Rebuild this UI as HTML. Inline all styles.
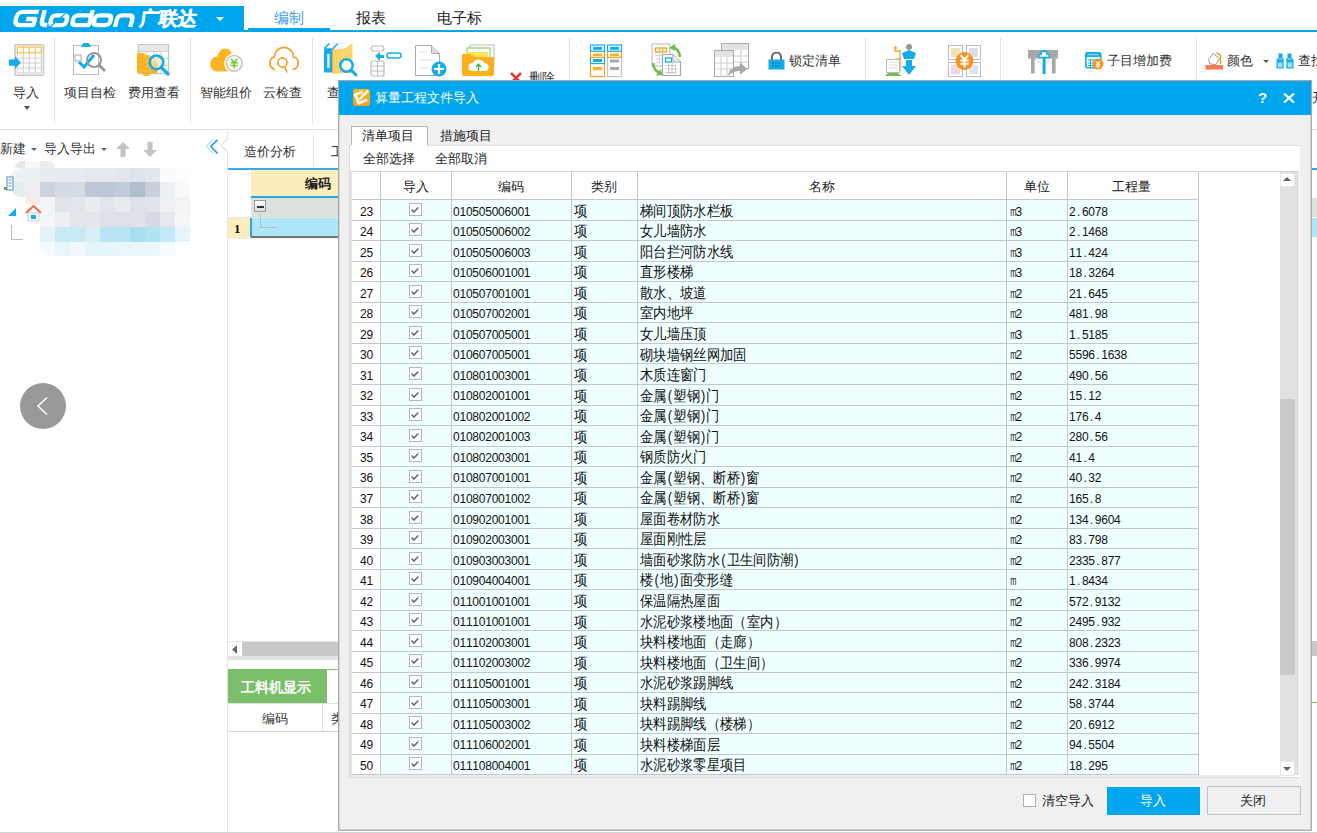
<!DOCTYPE html>
<html><head><meta charset="utf-8"><style>
html,body{margin:0;padding:0;width:1317px;height:833px;overflow:hidden;background:#fff;position:relative;font-family:"Liberation Sans",sans-serif}
div,svg{position:absolute}
.t{white-space:nowrap}
.tri{width:0;height:0;border-style:solid}
.num{font-family:"Liberation Sans",sans-serif;font-size:12px;line-height:12px;color:#111}
.num i{font-style:normal;display:inline-block;width:6.45px;text-align:center}
.num i.m{font-size:12px;transform:scaleX(0.62)}
.cj{font-size:14.5px;line-height:17px;color:#111;transform-origin:0 0;transform:scaleX(0.89)}
.cj i.p{font-style:normal;display:inline-block;width:7.25px;text-align:center}
.cb{width:13px;height:13px;border:1px solid #b5b5b5;background:#fff;box-sizing:border-box}
</style></head><body>
<div style="left:0px;top:6px;width:244px;height:26px;background:#00a6ed"></div>
<svg class="t" style="left:10px;top:8px" width="132" height="21" viewBox="0 0 132 21"><g transform="translate(2,2) matrix(1.02,0,-0.25,1,4.25,0)" stroke="#fff" stroke-width="4.3" fill="none" stroke-linejoin="round"><path d="M22.5 1.9H7.5Q1.9 1.9 1.9 7.5V9.5Q1.9 15.1 7.5 15.1H20.6V9H12"/><path d="M27.9 0V10.5Q27.9 15.1 32.5 15.1H34"/><path d="M40.5 5.4H48Q52 5.4 52 9.4V11Q52 15.1 48 15.1H40.5Q36.5 15.1 36.5 11V9.4Q36.5 5.4 40.5 5.4Z"/><path d="M75 0V15.1H62Q58 15.1 58 11V9.4Q58 5.4 62 5.4H75"/><path d="M83 5.4H91Q95 5.4 95 9.4V11Q95 15.1 91 15.1H83Q79 15.1 79 11V9.4Q79 5.4 83 5.4Z"/><path d="M101 17V9.4Q101 5.4 105 5.4H112Q116 5.4 116 9.4V17"/></g><path d="M40 19L55 6" stroke="#00a6ed" stroke-width="1.3"/></svg>
<div class="t" style="left:140px;top:8px;font:bold 19px/22px 'Liberation Sans',sans-serif;color:#fff;-webkit-text-stroke:0.5px #fff;transform:skewX(-8deg)">广联达</div>
<div class="tri" style="left:216px;top:17px;border-width:4px 4px 0 4px;border-color:#fff transparent transparent transparent"></div>
<div style="left:0px;top:30px;width:1317px;height:2px;background:#00a6ed"></div>
<div style="left:248px;top:28px;width:82px;height:4px;background:#00a6ed"></div>
<div class="t" style="left:274px;top:9px;font-size:15px;line-height:18px;color:#3d9de6">编制</div>
<div class="t" style="left:356px;top:9px;font-size:15px;line-height:18px;color:#222">报表</div>
<div class="t" style="left:437px;top:9px;font-size:15px;line-height:18px;color:#222">电子标</div>
<div style="left:54px;top:38px;width:1px;height:85px;background:#e3e3e3"></div>
<div style="left:190px;top:38px;width:1px;height:85px;background:#e3e3e3"></div>
<div style="left:312px;top:38px;width:1px;height:85px;background:#e3e3e3"></div>
<div style="left:569px;top:38px;width:1px;height:85px;background:#e3e3e3"></div>
<div style="left:865px;top:38px;width:1px;height:85px;background:#e3e3e3"></div>
<div style="left:1000px;top:38px;width:1px;height:85px;background:#e3e3e3"></div>
<div style="left:1196px;top:38px;width:1px;height:85px;background:#e3e3e3"></div>
<div style="left:0px;top:129px;width:1317px;height:1px;background:#e2e2e2"></div>
<div class="t" style="left:13px;top:84px;font-size:13px;line-height:17px;color:#333">导入</div>
<div class="t" style="left:64px;top:84px;font-size:13px;line-height:17px;color:#333">项目自检</div>
<div class="t" style="left:128px;top:84px;font-size:13px;line-height:17px;color:#333">费用查看</div>
<div class="t" style="left:200px;top:84px;font-size:13px;line-height:17px;color:#333">智能组价</div>
<div class="t" style="left:263px;top:84px;font-size:13px;line-height:17px;color:#333">云检查</div>
<div class="t" style="left:327px;top:84px;font-size:13px;line-height:17px;color:#333">查</div>
<div class="tri" style="left:24px;top:106px;border-width:4px 3.5px 0 3.5px;border-color:#555 transparent transparent transparent"></div>
<svg class="t" style="left:8px;top:43px" width="38" height="34" viewBox="0 0 38 34"><rect x="7" y="1.8" width="28.5" height="30.5" rx="1" fill="#fff" stroke="#c8c8c8" stroke-width="1.6"/><rect x="9.3" y="4" width="24" height="5.8" fill="#fff" stroke="#f9c14e" stroke-width="1.3"/><path d="M15.3 4v5.8M21.3 4v5.8M27.3 4v5.8" stroke="#f9c14e" stroke-width="1.1"/><path d="M9.3 9.8V30H33.3V9.8M9.3 15h24M9.3 20h24M9.3 25h24M15.3 9.8V30M21.3 9.8V30M27.3 9.8V30" stroke="#cfcfcf" stroke-width="1.1" fill="none"/><path d="M0.8 16.5H7V13.5L13 19.6 7 25.7V22.7H0.8Z" fill="#13aee9"/></svg>
<svg class="t" style="left:72px;top:42px" width="36" height="36" viewBox="0 0 36 36"><rect x="1.5" y="3.5" width="25" height="29" fill="#fff" stroke="#bbb"/><path d="M11 1h6l2 4h-10z" fill="#13aee9"/><rect x="3" y="13" width="6" height="6" fill="none" stroke="#aaa"/><path d="M7 20l5 5 10-12" stroke="#13aee9" stroke-width="3" fill="none"/><circle cx="22" cy="18" r="7" fill="none" stroke="#9a9a9a" stroke-width="2"/><path d="M27 23l6 6" stroke="#9a9a9a" stroke-width="3"/></svg>
<svg class="t" style="left:136px;top:43px" width="35" height="35" viewBox="0 0 35 35"><rect x="2.5" y="1.5" width="30" height="29" fill="#fff" stroke="#c4c4c4" stroke-width="1.3"/><rect x="3" y="2" width="29" height="6.5" fill="#e8e8e8"/><path d="M3 8.5H32M10 8.5V30M17.5 8.5V30M25 8.5V30M3 15.5H32M3 22.5H32" stroke="#cfcfcf" stroke-width="1"/><rect x="1" y="10" width="8" height="20" rx="1.5" fill="#fbb524"/><rect x="6.5" y="12" width="8" height="21" rx="1.5" fill="#fcbf3a"/><rect x="13.5" y="18" width="8" height="12" rx="1.5" fill="#fbb524"/><path d="M1 14.5H9M1 19H9M1 23.5H9M6.5 16.5H14.5M6.5 21H14.5M6.5 25.5H14.5M6.5 30H14.5" stroke="#f39c12" stroke-width="0.8"/><circle cx="20.5" cy="19.3" r="6.8" fill="#fde6b8" fill-opacity="0.7" stroke="#13aee9" stroke-width="2.6"/><path d="M25.3 24.3L32 31" stroke="#13aee9" stroke-width="3.2" stroke-linecap="round"/></svg>
<svg class="t" style="left:205px;top:42px" width="40" height="36" viewBox="0 0 40 36"><circle cx="12.5" cy="22" r="7.5" fill="#fbb520"/><circle cx="20.1" cy="13.2" r="6.8" fill="#fbb520"/><rect x="12.5" y="12" width="14" height="17.3" fill="#fbb520"/><circle cx="29.2" cy="21.3" r="10" fill="#fff"/><circle cx="29.2" cy="21.3" r="7.8" fill="#fff" stroke="#cdc8ba" stroke-width="1.7"/><path d="M25.8 16.8L29.2 20.3 32.6 16.8M29.2 20.3V26.5M25.6 20.8H32.8M25.6 23.5H32.8" stroke="#78c72e" stroke-width="1.6" fill="none"/></svg>
<svg class="t" style="left:262px;top:42px" width="40" height="36" viewBox="0 0 40 36"><path d="M13 27.5A6.5 6.5 0 0 1 12.5 14.9A9.5 9.5 0 0 1 31.5 14.8A6.5 6.5 0 0 1 30.5 27.5" fill="none" stroke="#f7a12b" stroke-width="1.7"/><circle cx="20.4" cy="20.5" r="4.6" fill="none" stroke="#f7a12b" stroke-width="1.7"/><path d="M22.6 24.6L25 30.5" stroke="#f7a12b" stroke-width="1.7"/></svg>
<svg class="t" style="left:323px;top:42px" width="36" height="36" viewBox="0 0 36 36"><path d="M19 8L29.5 1.5V31H19Z" fill="#fcd66d"/><rect x="9" y="7" width="10.5" height="24.5" fill="#fcd36a"/><rect x="9" y="7" width="1.2" height="24.5" fill="#f4b43a"/><path d="M10 7L15 1.5H21L16 7Z" fill="#fff" stroke="#e2e2e2" stroke-width="0.6"/><path d="M9.5 7.3L14.8 1.5" stroke="#13aee9" stroke-width="1.4"/><rect x="1" y="6" width="8" height="24.5" rx="1" fill="#13aee9"/><rect x="4.3" y="12" width="2.2" height="14" fill="#fff"/><path d="M2.5 6L7.5 1.5H13L8.5 6Z" fill="#fff" stroke="#e2e2e2" stroke-width="0.6"/><path d="M1.2 6.5L6.5 1.5" stroke="#13aee9" stroke-width="1.6"/><circle cx="23.5" cy="23.5" r="6.2" fill="#fff" stroke="#13aee9" stroke-width="2.6"/><path d="M28 28L33 33" stroke="#13aee9" stroke-width="3" stroke-linecap="round"/></svg>
<svg class="t" style="left:370px;top:45px" width="32" height="32" viewBox="0 0 32 32"><rect x="1" y="1" width="13" height="5" rx="2.5" fill="none" stroke="#bbb" stroke-width="1.2"/><path d="M5 11l5-4v3h4v3h-4v3z" fill="#13aee9"/><rect x="17" y="8" width="14" height="5" rx="2.5" fill="none" stroke="#13aee9" stroke-width="1.5"/><rect x="1" y="16" width="13" height="15" rx="2" fill="none" stroke="#bbb" stroke-width="1.2"/><line x1="1" y1="21" x2="14" y2="21" stroke="#bbb"/><line x1="1" y1="26" x2="14" y2="26" stroke="#bbb"/><line x1="7.5" y1="16" x2="7.5" y2="31" stroke="#bbb"/></svg>
<svg class="t" style="left:414px;top:44px" width="34" height="33" viewBox="0 0 34 33"><path d="M1.5 1.5h16l8 8v22h-24z" fill="#fff" stroke="#aaa"/><path d="M17.5 1.5v8h8" fill="#ddd" stroke="#aaa"/><line x1="5" y1="8" x2="12" y2="8" stroke="#ddd"/><line x1="5" y1="16" x2="19" y2="16" stroke="#ddd"/><line x1="5" y1="24" x2="15" y2="24" stroke="#ddd"/><circle cx="25" cy="25" r="7.5" fill="#13aee9"/><path d="M25 20v10M20 25h10" stroke="#fff" stroke-width="2.2"/></svg>
<svg class="t" style="left:462px;top:44px" width="34" height="33" viewBox="0 0 34 33"><rect x="8" y="1" width="24" height="20" fill="#fff" stroke="#bbb"/><rect x="5" y="4" width="23" height="18" fill="#fff" stroke="#7cc148"/><rect x="4" y="8" width="22" height="12" fill="#fde55a"/><path d="M0 10h10l2 3h20v17a2 2 0 0 1-2 2H2a2 2 0 0 1-2-2z" fill="#fbb11c"/><path d="M10 27a4 4 0 0 1 1-8a6 6 0 0 1 11 0a4 4 0 0 1 1 8z" fill="#fff"/><path d="M16.5 27v-6M14 23l2.5-3 2.5 3" stroke="#3bb24a" stroke-width="1.3" fill="none"/></svg>
<svg class="t" style="left:509px;top:71px" width="14" height="14" viewBox="0 0 14 14"><path d="M2 2l10 10M12 2L2 12" stroke="#e53935" stroke-width="2.5"/></svg>
<div class="t" style="left:529px;top:69px;font-size:13px;line-height:17px;color:#333">删除</div>
<svg class="t" style="left:589px;top:44px" width="35" height="34" viewBox="0 0 35 34"><rect x="1.5" y="19.5" width="14" height="13" fill="#fff" stroke="#f6a21d" stroke-width="1.2"/><rect x="4" y="23" width="9" height="3.2" fill="#fbb520"/><rect x="1.5" y="13.3" width="14" height="6.2" fill="#fff" stroke="#13aee9" stroke-width="1.2"/><rect x="4" y="15" width="9" height="3" fill="#13aee9"/><rect x="1.5" y="7.2" width="14" height="6.1" fill="#fff" stroke="#f6a21d" stroke-width="1.2"/><rect x="4" y="9.5" width="9" height="2.5" fill="#fbb520"/><rect x="1.5" y="1" width="14" height="6.2" fill="#fff" stroke="#13aee9" stroke-width="1.2"/><rect x="4" y="2.8" width="9" height="3" fill="#13aee9"/><rect x="18.5" y="13.3" width="14" height="19.2" fill="#fff" stroke="#c4c4c4" stroke-width="1.2"/><rect x="21" y="15.5" width="9" height="3" fill="#a8a8a8"/><rect x="21" y="23" width="9" height="3" fill="#a8a8a8"/><rect x="18.5" y="7.2" width="14" height="6.1" fill="#fff" stroke="#f6a21d" stroke-width="1.2"/><rect x="21" y="9.5" width="9" height="2.5" fill="#fbb520"/><rect x="18.5" y="1" width="14" height="6.2" fill="#fff" stroke="#13aee9" stroke-width="1.2"/><rect x="21" y="2.8" width="9" height="3" fill="#13aee9"/></svg>
<svg class="t" style="left:651px;top:43px" width="34" height="34" viewBox="0 0 34 34"><rect x="1" y="1" width="18" height="22" fill="#fff" stroke="#c4c4c4" stroke-width="1.2"/><rect x="4.5" y="5" width="11" height="4" fill="#fff" stroke="#f6a21d" stroke-width="1.3"/><path d="M8.2 5v4M11.8 5v4" stroke="#f6a21d" stroke-width="1"/><path d="M4.5 12.5h11M4.5 16h11M4.5 19.5h11M8.2 9v12M11.8 9v12" stroke="#d4d4d4" stroke-width="1"/><path d="M11.5 11.5H22L29.5 19V32.5H11.5Z" fill="#fff" stroke="#a8a8a8" stroke-width="1.2"/><path d="M22 11.5V19H29.5" fill="#eee" stroke="#a8a8a8" stroke-width="1"/><rect x="14.5" y="15" width="6" height="4" fill="#fff" stroke="#13aee9" stroke-width="1.3"/><path d="M14.5 22.5h11M14.5 26h11M14.5 29.5h11M17.5 19v12M21 19v12M24.5 22v9" stroke="#c8c8c8" stroke-width="1"/><path d="M22.5 4.5A10 10 0 0 1 28.8 14" stroke="#6cc04a" stroke-width="2.6" fill="none"/><path d="M18 4.8L24.5 0.8 23.8 8z" fill="#6cc04a"/><path d="M2.3 20A10 10 0 0 0 8 29.5" stroke="#6cc04a" stroke-width="2.6" fill="none"/><path d="M5 32.5L12 32 9.5 26z" fill="#6cc04a"/></svg>
<svg class="t" style="left:714px;top:43px" width="36" height="34" viewBox="0 0 36 34"><rect x="7.5" y="0.5" width="27" height="25" fill="#fff" stroke="#aaa"/><rect x="8" y="1" width="26" height="6" fill="#e4e4e4"/><rect x="0.5" y="7.5" width="19" height="26" fill="#fff" stroke="#aaa"/><rect x="1" y="8" width="18" height="6" fill="#e4e4e4"/><path d="M1 20h18M1 26h18M7 14v20M13 14v20M20 13h14M20 19h14M27 7v19" stroke="#ccc"/><path d="M14 33c1-7 6-10 12-10v-4l7 7-7 6v-4c-5 0-9 2-12 5z" fill="#a9a9a9"/></svg>
<svg class="t" style="left:768px;top:52px" width="17" height="18" viewBox="0 0 17 18"><path d="M4 8V5a4.5 4.5 0 0 1 9 0v3" stroke="#666" stroke-width="2" fill="none"/><rect x="0.5" y="7.5" width="16" height="10" fill="#13aee9"/><path d="M4 11h9M4 14h9" stroke="#0b6aa8" stroke-width="1" stroke-dasharray="2 1"/></svg>
<div class="t" style="left:789px;top:52px;font-size:13px;line-height:17px;color:#333">锁定清单</div>
<svg class="t" style="left:885px;top:43px" width="33" height="34" viewBox="0 0 33 34"><path d="M9 5h3M10 3v5h6M15 8v20" stroke="#f6a42c" stroke-width="1.3" fill="none"/><path d="M10 16h6" stroke="#f6a42c" stroke-width="1.3"/><rect x="1.5" y="16.5" width="13" height="13" fill="#fff" stroke="#bbb"/><path d="M4 19h8M4 22h8M4 25h8" stroke="#ddd"/><path d="M0 33l3-3h10l3 3z" fill="#6abf4b"/><circle cx="24" cy="4" r="3" fill="#999"/><path d="M17 10l7-3 7 3-2 6h-10z" fill="#13aee9"/><path d="M21 17h6v6h4l-7 9-7-9h4z" fill="#13aee9"/></svg>
<svg class="t" style="left:948px;top:45px" width="34" height="32" viewBox="0 0 34 32"><rect x="0.5" y="0.5" width="14" height="14" fill="#fff" stroke="#bbb"/><rect x="3" y="3" width="9" height="9" fill="#efe3b8"/><rect x="18.5" y="0.5" width="14" height="14" fill="#fff" stroke="#bbb"/><rect x="21" y="3" width="9" height="9" fill="#dddde2"/><rect x="0.5" y="17.5" width="14" height="14" fill="#fff" stroke="#bbb"/><rect x="3" y="20" width="9" height="9" fill="#f1d6da"/><rect x="18.5" y="17.5" width="14" height="14" fill="#fff" stroke="#bbb"/><rect x="21" y="20" width="9" height="9" fill="#d7e6f1"/><circle cx="16.5" cy="16" r="9" fill="#f6931e"/><path d="M12.5 10l4 4.5 4-4.5M16.5 14.5v8M12.3 15.5h8.4M12.3 18.8h8.4" stroke="#fff" stroke-width="2" fill="none"/></svg>
<svg class="t" style="left:1027px;top:49px" width="32" height="26" viewBox="0 0 32 26"><rect x="1" y="1" width="30" height="8.5" fill="#a8a8a8"/><rect x="4" y="9" width="3.6" height="15.5" fill="#a8a8a8"/><rect x="25" y="9" width="3.6" height="15.5" fill="#a8a8a8"/><path d="M7.5 10l8.5 6 8.5-6" stroke="#c8c8c8" stroke-width="0.8" fill="none"/><rect x="15.6" y="1" width="3" height="24" fill="#13aee9"/><path d="M14.2 2.5h5.8v3h2.3v3h-10.4v-3h2.3z" fill="#fff" stroke="#13aee9" stroke-width="1.4"/></svg>
<svg class="t" style="left:1085px;top:52px" width="19" height="18" viewBox="0 0 19 18"><rect x="0.8" y="0.8" width="15" height="15" rx="1.5" fill="#fff" stroke="#14aee9" stroke-width="1.6"/><rect x="1" y="1" width="14.6" height="4" fill="#14aee9"/><rect x="2.5" y="2" width="11" height="1.2" fill="#8ed8f5"/><path d="M3 8h8M3 11h8M3 13.5h8M5.5 7v8" stroke="#14aee9" stroke-width="1"/><circle cx="13" cy="12" r="5.5" fill="#f6961e"/><path d="M10.8 9l2.2 2.6 2.2-2.6M13 11.6v4.6M10.8 12.3h4.4M10.8 14.3h4.4" stroke="#fff" stroke-width="1.1" fill="none"/></svg>
<div class="t" style="left:1107px;top:52px;font-size:13px;line-height:17px;color:#333">子目增加费</div>
<svg class="t" style="left:1205px;top:51px" width="19" height="19" viewBox="0 0 19 19"><path d="M3.5 8.5L8 2.5 14.5 7.5 11 13.5 5 13z" fill="#fff" stroke="#9a9a9a"/><path d="M11.5 1.5L15.5 4.5V13" stroke="#f0962a" stroke-width="1.5" fill="none"/><rect x="0.5" y="14" width="17.5" height="4.5" fill="#f47b50"/></svg>
<div class="t" style="left:1227px;top:52px;font-size:13px;line-height:17px;color:#333">颜色</div>
<div class="tri" style="left:1263px;top:60px;border-width:3px 3px 0 3px;border-color:#555 transparent transparent transparent"></div>
<svg class="t" style="left:1276px;top:53px" width="18" height="16" viewBox="0 0 18 16"><path d="M2.5 0.5h4v4l1.2 1.3V15.5H0.5V6.5l2-2z" fill="#14aee9"/><path d="M15.5 0.5h-4v4l-1.2 1.3V15.5h7.2V6.5l-2-2z" fill="#14aee9"/><rect x="1.8" y="9.5" width="4.6" height="4.8" fill="#a5e1f7"/><rect x="11.6" y="9.5" width="4.6" height="4.8" fill="#a5e1f7"/><rect x="2.5" y="5.5" width="4" height="1" fill="#a5e1f7"/><rect x="11.5" y="5.5" width="4" height="1" fill="#a5e1f7"/></svg>
<div class="t" style="left:1298px;top:52px;font-size:13px;line-height:17px;color:#333">查找</div>
<div class="t" style="left:1312px;top:89px;font-size:13px;line-height:17px;color:#333">开</div>
<div class="t" style="left:0px;top:140px;font-size:13px;line-height:17px;color:#333">新建</div>
<div class="tri" style="left:31px;top:148px;border-width:3px 3px 0 3px;border-color:#666 transparent transparent transparent"></div>
<div class="t" style="left:44px;top:140px;font-size:13px;line-height:17px;color:#333">导入导出</div>
<div class="tri" style="left:101px;top:148px;border-width:3px 3px 0 3px;border-color:#666 transparent transparent transparent"></div>
<svg class="t" style="left:116px;top:142px" width="14" height="15" viewBox="0 0 14 15"><path d="M7 0l7 7H9.5v8h-5V7H0z" fill="#c4c4c4"/></svg>
<svg class="t" style="left:143px;top:142px" width="14" height="15" viewBox="0 0 14 15"><path d="M7 15l7-7H9.5V0h-5v8H0z" fill="#c4c4c4"/></svg>
<svg class="t" style="left:204px;top:137px" width="16" height="19" viewBox="0 0 16 19"><path d="M9.3 2.4L2.1 9.3 9.3 16.5" stroke="#7fd0ee" stroke-width="1" fill="none"/><path d="M13.5 2.9L6.9 9.3 13.5 16.5" stroke="#1a9fd8" stroke-width="1.6" fill="none"/></svg>
<div style="left:227px;top:131px;width:1px;height:8px;background:#e4e4e4"></div>
<div style="left:227px;top:153px;width:1px;height:680px;background:#e4e4e4"></div>
<svg class="t" style="left:219px;top:138px" width="10" height="16" viewBox="0 0 10 16"><path d="M8.5 0.5L2 7.5 8.5 14.5" stroke="#e4e4e4" stroke-width="1.2" fill="none"/></svg>
<div style="left:10px;top:168px;width:15px;height:15px;background:#eef2f6;border-top-left-radius:12px"></div>
<div style="left:25px;top:168px;width:15px;height:15px;background:#eceef2;"></div>
<div style="left:40px;top:168px;width:15px;height:15px;background:#e8ebf0;"></div>
<div style="left:55px;top:168px;width:15px;height:15px;background:#e8ebf0;"></div>
<div style="left:70px;top:168px;width:15px;height:15px;background:#e8ebf1;"></div>
<div style="left:85px;top:168px;width:15px;height:15px;background:#e6e9ef;"></div>
<div style="left:100px;top:168px;width:15px;height:15px;background:#e6e9ef;"></div>
<div style="left:115px;top:168px;width:15px;height:15px;background:#e3e7ed;"></div>
<div style="left:130px;top:168px;width:15px;height:15px;background:#dfe3eb;"></div>
<div style="left:145px;top:168px;width:15px;height:15px;background:#e3e7ee;"></div>
<div style="left:160px;top:168px;width:15px;height:15px;background:#fbfcfd;"></div>
<div style="left:175px;top:168px;width:15px;height:15px;background:#fdfdfe;"></div>
<div style="left:10px;top:182px;width:15px;height:15px;background:#e5eeee;border-bottom-left-radius:12px"></div>
<div style="left:25px;top:182px;width:15px;height:15px;background:#eceef2;"></div>
<div style="left:40px;top:182px;width:15px;height:15px;background:#cdd4e0;"></div>
<div style="left:55px;top:182px;width:15px;height:15px;background:#d5dbe5;"></div>
<div style="left:70px;top:182px;width:15px;height:15px;background:#d6dce6;"></div>
<div style="left:85px;top:182px;width:15px;height:15px;background:#bec8d8;"></div>
<div style="left:100px;top:182px;width:15px;height:15px;background:#bdc7d7;"></div>
<div style="left:115px;top:182px;width:15px;height:15px;background:#c2cbd9;"></div>
<div style="left:130px;top:182px;width:15px;height:15px;background:#b0bdd0;"></div>
<div style="left:145px;top:182px;width:15px;height:15px;background:#c8d0de;"></div>
<div style="left:160px;top:182px;width:15px;height:15px;background:#eceff3;"></div>
<div style="left:175px;top:182px;width:15px;height:15px;background:#fafafa;"></div>
<div style="left:40px;top:197px;width:15px;height:15px;background:#f4f5f8;"></div>
<div style="left:55px;top:197px;width:15px;height:15px;background:#dfe3ea;"></div>
<div style="left:70px;top:197px;width:15px;height:15px;background:#e2e5eb;"></div>
<div style="left:85px;top:197px;width:15px;height:15px;background:#eaecf0;"></div>
<div style="left:100px;top:197px;width:15px;height:15px;background:#e2e6ec;"></div>
<div style="left:115px;top:197px;width:15px;height:15px;background:#e8eaef;"></div>
<div style="left:130px;top:197px;width:15px;height:15px;background:#dde1e9;"></div>
<div style="left:145px;top:197px;width:15px;height:15px;background:#e1e4eb;"></div>
<div style="left:160px;top:197px;width:15px;height:15px;background:#eef0f3;"></div>
<div style="left:175px;top:197px;width:15px;height:15px;background:#f3f4f6;"></div>
<div style="left:40px;top:212px;width:15px;height:15px;background:#f4f5f7;border-top-left-radius:8px"></div>
<div style="left:55px;top:212px;width:15px;height:15px;background:#eceef1;"></div>
<div style="left:70px;top:212px;width:15px;height:15px;background:#e3e6ec;"></div>
<div style="left:85px;top:212px;width:15px;height:15px;background:#e3e6ec;"></div>
<div style="left:100px;top:212px;width:15px;height:15px;background:#dde1e9;"></div>
<div style="left:115px;top:212px;width:15px;height:15px;background:#dde1e9;"></div>
<div style="left:130px;top:212px;width:15px;height:15px;background:#dfe2ea;"></div>
<div style="left:145px;top:212px;width:15px;height:15px;background:#d5dae4;"></div>
<div style="left:160px;top:212px;width:15px;height:15px;background:#e5e8ee;"></div>
<div style="left:175px;top:212px;width:15px;height:15px;background:#f5f6f8;"></div>
<div style="left:40px;top:227px;width:15px;height:15px;background:#e2f3f9;"></div>
<div style="left:55px;top:227px;width:15px;height:15px;background:#c8eaf4;"></div>
<div style="left:70px;top:227px;width:15px;height:15px;background:#c8eaf4;"></div>
<div style="left:85px;top:227px;width:15px;height:15px;background:#d8eff7;"></div>
<div style="left:100px;top:227px;width:15px;height:15px;background:#b9e4f3;"></div>
<div style="left:115px;top:227px;width:15px;height:15px;background:#b9e4f3;"></div>
<div style="left:130px;top:227px;width:15px;height:15px;background:#a8def1;"></div>
<div style="left:145px;top:227px;width:15px;height:15px;background:#b1e2f2;"></div>
<div style="left:160px;top:227px;width:15px;height:15px;background:#c4e8f5;"></div>
<div style="left:175px;top:227px;width:15px;height:15px;background:#e6f5fb;"></div>
<div style="left:40px;top:242px;width:15px;height:14px;background:#f4fafc;border-bottom-left-radius:10px"></div>
<div style="left:55px;top:242px;width:15px;height:14px;background:#e8f6fb;"></div>
<div style="left:70px;top:242px;width:15px;height:14px;background:#f2f9fc;"></div>
<div style="left:85px;top:242px;width:15px;height:14px;background:#e6f5fa;"></div>
<div style="left:100px;top:242px;width:15px;height:14px;background:#e6f5fa;"></div>
<div style="left:115px;top:242px;width:15px;height:14px;background:#e8f6fb;"></div>
<div style="left:130px;top:242px;width:15px;height:14px;background:#e8f6fb;"></div>
<div style="left:145px;top:242px;width:15px;height:14px;background:#eaf7fb;"></div>
<div style="left:160px;top:242px;width:15px;height:14px;background:#f8fcfe;"></div>
<div style="left:15px;top:161px;width:10px;height:7px;background:#e6e6e6;border-top-left-radius:8px"></div>
<div style="left:25px;top:197px;width:15px;height:7px;background:#fbe9e6"></div>
<div style="left:25px;top:161px;width:15px;height:7px;background:#f8f8f8"></div>
<div style="left:40px;top:161px;width:15px;height:7px;background:#ededed;border-top-right-radius:10px"></div>
<svg class="t" style="left:4px;top:176px" width="10" height="15" viewBox="0 0 10 15"><rect x="3" y="1" width="6" height="13" fill="#fff" stroke="#4a8fd0"/><path d="M4.5 4h3M4.5 7h3M4.5 10h3" stroke="#4a8fd0"/><rect x="0" y="11" width="3" height="3" fill="#4caf50"/></svg>
<svg class="t" style="left:8px;top:208px" width="8" height="8" viewBox="0 0 8 8"><path d="M8 0v8H0z" fill="#13aee9"/></svg>
<svg class="t" style="left:25px;top:205px" width="17" height="17" viewBox="0 0 17 17"><path d="M1 8l7.5-7 7.5 7" stroke="#ee6a3c" stroke-width="2" fill="none"/><rect x="3" y="8" width="11" height="8" fill="#fff" stroke="#ccc"/><rect x="6" y="10" width="5" height="4" fill="#13aee9"/></svg>
<svg class="t" style="left:10px;top:225px" width="14" height="16" viewBox="0 0 14 16"><path d="M1.5 0v14.5H13" stroke="#bbb" fill="none"/></svg>
<div class="t" style="left:20px;top:383px;width:46px;height:46px;border-radius:50%;background:#999"></div>
<svg class="t" style="left:35px;top:396px" width="14" height="20" viewBox="0 0 14 20"><path d="M12 1.5L3 10l9 8.5" stroke="#fff" stroke-width="1.5" fill="none"/></svg>
<div class="t" style="left:244px;top:143px;font-size:13px;line-height:17px;color:#333">造价分析</div>
<div style="left:313px;top:134px;width:1px;height:33px;background:#e6e6e6"></div>
<div class="t" style="left:331px;top:143px;font-size:13px;line-height:17px;color:#333">工</div>
<div style="left:228px;top:168px;width:111px;height:2px;background:#35aee3"></div>
<div style="left:251px;top:170px;width:88px;height:26px;background:#feeebb"></div>
<div class="t" style="left:305px;top:175px;font-size:13px;line-height:17px;color:#222;font-weight:bold">编码</div>
<div style="left:251px;top:196px;width:88px;height:2px;background:#2aa6e0"></div>
<div style="left:251px;top:198px;width:88px;height:19px;background:#dbe2dc"></div>
<div style="left:228px;top:217px;width:111px;height:1px;background:#e8e8e8"></div>
<div class="t" style="left:254px;top:200px;width:12px;height:12px;border:1px solid #999;background:linear-gradient(#fff,#ddd);box-sizing:border-box"></div>
<div style="left:257px;top:206px;width:7px;height:2px;background:#333"></div>
<div style="left:228px;top:218px;width:23px;height:20px;background:#feeebb"></div>
<div class="t" style="left:234px;top:220px;font:bold 13px/17px 'Liberation Serif',serif;color:#111">1</div>
<div style="left:250px;top:218px;width:89px;height:19px;background:#ade6f8;border-left:2px solid #2aa6e0;box-sizing:border-box"></div>
<div style="left:251px;top:236px;width:88px;height:2px;background:#777"></div>
<svg class="t" style="left:259px;top:214px" width="20" height="16" viewBox="0 0 20 16"><path d="M1.5 0v13.5H18" stroke="#bbb" fill="none"/></svg>
<div style="left:228px;top:238px;width:111px;height:1px;background:#eee"></div>
<div style="left:228px;top:641px;width:111px;height:19px;background:#e4e4e4"></div>
<div style="left:228px;top:642px;width:14px;height:14px;background:#fff"></div>
<svg class="t" style="left:231px;top:645px" width="8" height="9" viewBox="0 0 8 9"><path d="M6 0v9L1 4.5z" fill="#666"/></svg>
<div style="left:242px;top:642px;width:97px;height:14px;background:#c9c9c9"></div>
<div style="left:228px;top:660px;width:111px;height:9px;background:#fff"></div>
<div style="left:228px;top:669px;width:99px;height:34px;background:#7bbf6a"></div>
<div class="t" style="left:241px;top:678px;font-size:14px;line-height:18px;color:#fff;font-weight:bold">工料机显示</div>
<div style="left:327px;top:669px;width:12px;height:1px;background:#7bbf6a"></div>
<div style="left:228px;top:703px;width:111px;height:1px;background:#e0e0e0"></div>
<div style="left:322px;top:704px;width:1px;height:28px;background:#e0e0e0"></div>
<div style="left:228px;top:731px;width:111px;height:1px;background:#d0d0d0"></div>
<div class="t" style="left:262px;top:710px;font-size:13px;line-height:17px;color:#333">编码</div>
<div class="t" style="left:331px;top:710px;font-size:13px;line-height:17px;color:#333">类</div>
<div style="left:0px;top:832px;width:1317px;height:1px;background:#d4d4d4"></div>
<div style="left:1312px;top:129px;width:5px;height:1px;background:#dadada"></div>
<div style="left:1312px;top:168px;width:5px;height:2px;background:#2aa6e0"></div>
<div style="left:1312px;top:198px;width:5px;height:19px;background:#dbe2dc"></div>
<div style="left:1312px;top:218px;width:5px;height:19px;background:#ade6f8"></div>
<div style="left:1312px;top:641px;width:5px;height:15px;background:#c9c9c9"></div>
<div style="left:1312px;top:702px;width:5px;height:1px;background:#7bbf6a"></div>
<div style="left:338px;top:80px;width:974px;height:751px;background:#f0f0f0;border:1px solid #ababab;box-shadow:inset 0 0 0 1px #d6d6d6;box-sizing:border-box"></div>
<div style="left:339px;top:81px;width:972px;height:34px;background:#00a6ed"></div>
<svg class="t" style="left:353px;top:89px" width="17" height="17" viewBox="0 0 17 17"><defs><linearGradient id="og" x1="0" y1="0" x2="0" y2="1"><stop offset="0" stop-color="#feb912"/><stop offset="1" stop-color="#f89c1c"/></linearGradient></defs><rect x="0" y="0" width="17" height="17" rx="2.5" fill="url(#og)"/><path d="M8.5 3.2L2.2 5.8 5.8 14.2 13 11.2" stroke="#fff" stroke-width="2.8" fill="none" stroke-linejoin="round" stroke-linecap="round"/><path d="M14.3 2.4L7.2 9.6" stroke="#fff" stroke-width="2.6" stroke-linecap="round"/></svg>
<div class="t" style="left:375px;top:89px;font-size:13px;line-height:17px;color:#fff">算量工程文件导入</div>
<div class="t" style="left:1258px;top:89px;font:bold 15px/18px 'Liberation Sans',sans-serif;color:#fff">?</div>
<svg class="t" style="left:1283px;top:93px" width="12" height="10" viewBox="0 0 12 10"><path d="M1 0.5l10 9M11 0.5l-10 9" stroke="#fff" stroke-width="2.2"/></svg>
<div style="left:351px;top:126px;width:77px;height:20px;background:#fff;border:1px solid #b9b9b9;border-bottom:none;box-sizing:border-box"></div>
<div class="t" style="left:362px;top:127px;font-size:13px;line-height:17px;color:#222">清单项目</div>
<div class="t" style="left:440px;top:127px;font-size:13px;line-height:17px;color:#222">措施项目</div>
<div style="left:349px;top:145px;width:951px;height:633px;background:#fff;border-left:1px solid #dcdcdc;border-top:1px solid #dcdcdc;box-sizing:border-box"></div>
<div style="left:351px;top:145px;width:76px;height:1px;background:#fff"></div>
<div class="t" style="left:363px;top:150px;font-size:13px;line-height:17px;color:#222">全部选择</div>
<div class="t" style="left:435px;top:150px;font-size:13px;line-height:17px;color:#222">全部取消</div>
<div style="left:350px;top:171px;width:949px;height:607px;background:#fff"></div>
<div style="left:350px;top:171px;width:949px;height:1px;background:#d2d2d2"></div>
<div style="left:350px;top:171px;width:2px;height:607px;background:#e4e4e4"></div>
<div style="left:381px;top:199px;width:817px;height:21px;background:#effefe"></div>
<div style="left:381px;top:220px;width:817px;height:20px;background:#effefe"></div>
<div style="left:381px;top:240px;width:817px;height:21px;background:#effefe"></div>
<div style="left:381px;top:261px;width:817px;height:20px;background:#effefe"></div>
<div style="left:381px;top:281px;width:817px;height:21px;background:#effefe"></div>
<div style="left:381px;top:302px;width:817px;height:20px;background:#effefe"></div>
<div style="left:381px;top:322px;width:817px;height:21px;background:#effefe"></div>
<div style="left:381px;top:343px;width:817px;height:20px;background:#effefe"></div>
<div style="left:381px;top:363px;width:817px;height:21px;background:#effefe"></div>
<div style="left:381px;top:384px;width:817px;height:21px;background:#effefe"></div>
<div style="left:381px;top:405px;width:817px;height:20px;background:#effefe"></div>
<div style="left:381px;top:425px;width:817px;height:21px;background:#effefe"></div>
<div style="left:381px;top:446px;width:817px;height:20px;background:#effefe"></div>
<div style="left:381px;top:466px;width:817px;height:21px;background:#effefe"></div>
<div style="left:381px;top:487px;width:817px;height:20px;background:#effefe"></div>
<div style="left:381px;top:507px;width:817px;height:21px;background:#effefe"></div>
<div style="left:381px;top:528px;width:817px;height:20px;background:#effefe"></div>
<div style="left:381px;top:548px;width:817px;height:21px;background:#effefe"></div>
<div style="left:381px;top:569px;width:817px;height:20px;background:#effefe"></div>
<div style="left:381px;top:589px;width:817px;height:21px;background:#effefe"></div>
<div style="left:381px;top:610px;width:817px;height:20px;background:#effefe"></div>
<div style="left:381px;top:630px;width:817px;height:21px;background:#effefe"></div>
<div style="left:381px;top:651px;width:817px;height:21px;background:#effefe"></div>
<div style="left:381px;top:672px;width:817px;height:20px;background:#effefe"></div>
<div style="left:381px;top:692px;width:817px;height:21px;background:#effefe"></div>
<div style="left:381px;top:713px;width:817px;height:20px;background:#effefe"></div>
<div style="left:381px;top:733px;width:817px;height:21px;background:#effefe"></div>
<div style="left:381px;top:754px;width:817px;height:20px;background:#effefe"></div>
<div style="left:352px;top:199px;width:846px;height:1px;background:#c6c6c6"></div>
<div style="left:352px;top:220px;width:846px;height:1px;background:#c6c6c6"></div>
<div style="left:352px;top:240px;width:846px;height:1px;background:#c6c6c6"></div>
<div style="left:352px;top:261px;width:846px;height:1px;background:#c6c6c6"></div>
<div style="left:352px;top:281px;width:846px;height:1px;background:#c6c6c6"></div>
<div style="left:352px;top:302px;width:846px;height:1px;background:#c6c6c6"></div>
<div style="left:352px;top:322px;width:846px;height:1px;background:#c6c6c6"></div>
<div style="left:352px;top:343px;width:846px;height:1px;background:#c6c6c6"></div>
<div style="left:352px;top:363px;width:846px;height:1px;background:#c6c6c6"></div>
<div style="left:352px;top:384px;width:846px;height:1px;background:#c6c6c6"></div>
<div style="left:352px;top:405px;width:846px;height:1px;background:#c6c6c6"></div>
<div style="left:352px;top:425px;width:846px;height:1px;background:#c6c6c6"></div>
<div style="left:352px;top:446px;width:846px;height:1px;background:#c6c6c6"></div>
<div style="left:352px;top:466px;width:846px;height:1px;background:#c6c6c6"></div>
<div style="left:352px;top:487px;width:846px;height:1px;background:#c6c6c6"></div>
<div style="left:352px;top:507px;width:846px;height:1px;background:#c6c6c6"></div>
<div style="left:352px;top:528px;width:846px;height:1px;background:#c6c6c6"></div>
<div style="left:352px;top:548px;width:846px;height:1px;background:#c6c6c6"></div>
<div style="left:352px;top:569px;width:846px;height:1px;background:#c6c6c6"></div>
<div style="left:352px;top:589px;width:846px;height:1px;background:#c6c6c6"></div>
<div style="left:352px;top:610px;width:846px;height:1px;background:#c6c6c6"></div>
<div style="left:352px;top:630px;width:846px;height:1px;background:#c6c6c6"></div>
<div style="left:352px;top:651px;width:846px;height:1px;background:#c6c6c6"></div>
<div style="left:352px;top:672px;width:846px;height:1px;background:#c6c6c6"></div>
<div style="left:352px;top:692px;width:846px;height:1px;background:#c6c6c6"></div>
<div style="left:352px;top:713px;width:846px;height:1px;background:#c6c6c6"></div>
<div style="left:352px;top:733px;width:846px;height:1px;background:#c6c6c6"></div>
<div style="left:352px;top:754px;width:846px;height:1px;background:#c6c6c6"></div>
<div style="left:352px;top:774px;width:846px;height:1px;background:#c6c6c6"></div>
<div style="left:352px;top:775px;width:928px;height:3px;background:#ececec"></div>
<div style="left:350px;top:777px;width:949px;height:1px;background:#dcdcdc"></div>
<div style="left:380px;top:171px;width:1px;height:604px;background:#c6c6c6"></div>
<div style="left:451px;top:171px;width:1px;height:604px;background:#c6c6c6"></div>
<div style="left:571px;top:171px;width:1px;height:604px;background:#c6c6c6"></div>
<div style="left:637px;top:171px;width:1px;height:604px;background:#c6c6c6"></div>
<div style="left:1006px;top:171px;width:1px;height:604px;background:#c6c6c6"></div>
<div style="left:1067px;top:171px;width:1px;height:604px;background:#c6c6c6"></div>
<div style="left:1198px;top:171px;width:1px;height:604px;background:#c6c6c6"></div>
<div class="t" style="left:403px;top:178px;font-size:13px;line-height:17px;color:#222">导入</div>
<div class="t" style="left:498px;top:178px;font-size:13px;line-height:17px;color:#222">编码</div>
<div class="t" style="left:591px;top:178px;font-size:13px;line-height:17px;color:#222">类别</div>
<div class="t" style="left:809px;top:178px;font-size:13px;line-height:17px;color:#222">名称</div>
<div class="t" style="left:1024px;top:178px;font-size:13px;line-height:17px;color:#222">单位</div>
<div class="t" style="left:1112px;top:178px;font-size:13px;line-height:17px;color:#222">工程量</div>
<div class="t num" style="left:360px;top:206px"><i class="c">2</i><i class="c">3</i></div>
<div class="t cb" style="left:409px;top:203px"></div>
<svg class="t" style="left:410px;top:204px" width="11" height="11" viewBox="0 0 11 11"><path d="M1.6 5.5L3.9 8.1 8.3 3.4" stroke="#62667e" stroke-width="1.5" fill="none"/></svg>
<div class="t num" style="left:453px;top:206px"><i class="c">0</i><i class="c">1</i><i class="c">0</i><i class="c">5</i><i class="c">0</i><i class="c">5</i><i class="c">0</i><i class="c">0</i><i class="c">6</i><i class="c">0</i><i class="c">0</i><i class="c">1</i></div>
<div class="t cj" style="left:574px;top:203px">项</div>
<div class="t cj" style="left:640px;top:203px">梯间顶防水栏板</div>
<div class="t num" style="left:1009px;top:206px"><i class="c m">m</i><i class="c">3</i></div>
<div class="t num" style="left:1069px;top:206px"><i class="c">2</i><i class="c">.</i><i class="c">6</i><i class="c">0</i><i class="c">7</i><i class="c">8</i></div>
<div class="t num" style="left:360px;top:226px"><i class="c">2</i><i class="c">4</i></div>
<div class="t cb" style="left:409px;top:223px"></div>
<svg class="t" style="left:410px;top:224px" width="11" height="11" viewBox="0 0 11 11"><path d="M1.6 5.5L3.9 8.1 8.3 3.4" stroke="#62667e" stroke-width="1.5" fill="none"/></svg>
<div class="t num" style="left:453px;top:226px"><i class="c">0</i><i class="c">1</i><i class="c">0</i><i class="c">5</i><i class="c">0</i><i class="c">5</i><i class="c">0</i><i class="c">0</i><i class="c">6</i><i class="c">0</i><i class="c">0</i><i class="c">2</i></div>
<div class="t cj" style="left:574px;top:223px">项</div>
<div class="t cj" style="left:640px;top:223px">女儿墙防水</div>
<div class="t num" style="left:1009px;top:226px"><i class="c m">m</i><i class="c">3</i></div>
<div class="t num" style="left:1069px;top:226px"><i class="c">2</i><i class="c">.</i><i class="c">1</i><i class="c">4</i><i class="c">6</i><i class="c">8</i></div>
<div class="t num" style="left:360px;top:247px"><i class="c">2</i><i class="c">5</i></div>
<div class="t cb" style="left:409px;top:244px"></div>
<svg class="t" style="left:410px;top:245px" width="11" height="11" viewBox="0 0 11 11"><path d="M1.6 5.5L3.9 8.1 8.3 3.4" stroke="#62667e" stroke-width="1.5" fill="none"/></svg>
<div class="t num" style="left:453px;top:247px"><i class="c">0</i><i class="c">1</i><i class="c">0</i><i class="c">5</i><i class="c">0</i><i class="c">5</i><i class="c">0</i><i class="c">0</i><i class="c">6</i><i class="c">0</i><i class="c">0</i><i class="c">3</i></div>
<div class="t cj" style="left:574px;top:244px">项</div>
<div class="t cj" style="left:640px;top:244px">阳台拦河防水线</div>
<div class="t num" style="left:1009px;top:247px"><i class="c m">m</i><i class="c">3</i></div>
<div class="t num" style="left:1069px;top:247px"><i class="c">1</i><i class="c">1</i><i class="c">.</i><i class="c">4</i><i class="c">2</i><i class="c">4</i></div>
<div class="t num" style="left:360px;top:267px"><i class="c">2</i><i class="c">6</i></div>
<div class="t cb" style="left:409px;top:264px"></div>
<svg class="t" style="left:410px;top:265px" width="11" height="11" viewBox="0 0 11 11"><path d="M1.6 5.5L3.9 8.1 8.3 3.4" stroke="#62667e" stroke-width="1.5" fill="none"/></svg>
<div class="t num" style="left:453px;top:267px"><i class="c">0</i><i class="c">1</i><i class="c">0</i><i class="c">5</i><i class="c">0</i><i class="c">6</i><i class="c">0</i><i class="c">0</i><i class="c">1</i><i class="c">0</i><i class="c">0</i><i class="c">1</i></div>
<div class="t cj" style="left:574px;top:264px">项</div>
<div class="t cj" style="left:640px;top:264px">直形楼梯</div>
<div class="t num" style="left:1009px;top:267px"><i class="c m">m</i><i class="c">3</i></div>
<div class="t num" style="left:1069px;top:267px"><i class="c">1</i><i class="c">8</i><i class="c">.</i><i class="c">3</i><i class="c">2</i><i class="c">6</i><i class="c">4</i></div>
<div class="t num" style="left:360px;top:288px"><i class="c">2</i><i class="c">7</i></div>
<div class="t cb" style="left:409px;top:285px"></div>
<svg class="t" style="left:410px;top:286px" width="11" height="11" viewBox="0 0 11 11"><path d="M1.6 5.5L3.9 8.1 8.3 3.4" stroke="#62667e" stroke-width="1.5" fill="none"/></svg>
<div class="t num" style="left:453px;top:288px"><i class="c">0</i><i class="c">1</i><i class="c">0</i><i class="c">5</i><i class="c">0</i><i class="c">7</i><i class="c">0</i><i class="c">0</i><i class="c">1</i><i class="c">0</i><i class="c">0</i><i class="c">1</i></div>
<div class="t cj" style="left:574px;top:285px">项</div>
<div class="t cj" style="left:640px;top:285px">散水、坡道</div>
<div class="t num" style="left:1009px;top:288px"><i class="c m">m</i><i class="c">2</i></div>
<div class="t num" style="left:1069px;top:288px"><i class="c">2</i><i class="c">1</i><i class="c">.</i><i class="c">6</i><i class="c">4</i><i class="c">5</i></div>
<div class="t num" style="left:360px;top:308px"><i class="c">2</i><i class="c">8</i></div>
<div class="t cb" style="left:409px;top:305px"></div>
<svg class="t" style="left:410px;top:306px" width="11" height="11" viewBox="0 0 11 11"><path d="M1.6 5.5L3.9 8.1 8.3 3.4" stroke="#62667e" stroke-width="1.5" fill="none"/></svg>
<div class="t num" style="left:453px;top:308px"><i class="c">0</i><i class="c">1</i><i class="c">0</i><i class="c">5</i><i class="c">0</i><i class="c">7</i><i class="c">0</i><i class="c">0</i><i class="c">2</i><i class="c">0</i><i class="c">0</i><i class="c">1</i></div>
<div class="t cj" style="left:574px;top:305px">项</div>
<div class="t cj" style="left:640px;top:305px">室内地坪</div>
<div class="t num" style="left:1009px;top:308px"><i class="c m">m</i><i class="c">2</i></div>
<div class="t num" style="left:1069px;top:308px"><i class="c">4</i><i class="c">8</i><i class="c">1</i><i class="c">.</i><i class="c">9</i><i class="c">8</i></div>
<div class="t num" style="left:360px;top:329px"><i class="c">2</i><i class="c">9</i></div>
<div class="t cb" style="left:409px;top:326px"></div>
<svg class="t" style="left:410px;top:327px" width="11" height="11" viewBox="0 0 11 11"><path d="M1.6 5.5L3.9 8.1 8.3 3.4" stroke="#62667e" stroke-width="1.5" fill="none"/></svg>
<div class="t num" style="left:453px;top:329px"><i class="c">0</i><i class="c">1</i><i class="c">0</i><i class="c">5</i><i class="c">0</i><i class="c">7</i><i class="c">0</i><i class="c">0</i><i class="c">5</i><i class="c">0</i><i class="c">0</i><i class="c">1</i></div>
<div class="t cj" style="left:574px;top:326px">项</div>
<div class="t cj" style="left:640px;top:326px">女儿墙压顶</div>
<div class="t num" style="left:1009px;top:329px"><i class="c m">m</i><i class="c">3</i></div>
<div class="t num" style="left:1069px;top:329px"><i class="c">1</i><i class="c">.</i><i class="c">5</i><i class="c">1</i><i class="c">8</i><i class="c">5</i></div>
<div class="t num" style="left:360px;top:349px"><i class="c">3</i><i class="c">0</i></div>
<div class="t cb" style="left:409px;top:346px"></div>
<svg class="t" style="left:410px;top:347px" width="11" height="11" viewBox="0 0 11 11"><path d="M1.6 5.5L3.9 8.1 8.3 3.4" stroke="#62667e" stroke-width="1.5" fill="none"/></svg>
<div class="t num" style="left:453px;top:349px"><i class="c">0</i><i class="c">1</i><i class="c">0</i><i class="c">6</i><i class="c">0</i><i class="c">7</i><i class="c">0</i><i class="c">0</i><i class="c">5</i><i class="c">0</i><i class="c">0</i><i class="c">1</i></div>
<div class="t cj" style="left:574px;top:347px">项</div>
<div class="t cj" style="left:640px;top:347px">砌块墙钢丝网加固</div>
<div class="t num" style="left:1009px;top:349px"><i class="c m">m</i><i class="c">2</i></div>
<div class="t num" style="left:1069px;top:349px"><i class="c">5</i><i class="c">5</i><i class="c">9</i><i class="c">6</i><i class="c">.</i><i class="c">1</i><i class="c">6</i><i class="c">3</i><i class="c">8</i></div>
<div class="t num" style="left:360px;top:370px"><i class="c">3</i><i class="c">1</i></div>
<div class="t cb" style="left:409px;top:367px"></div>
<svg class="t" style="left:410px;top:368px" width="11" height="11" viewBox="0 0 11 11"><path d="M1.6 5.5L3.9 8.1 8.3 3.4" stroke="#62667e" stroke-width="1.5" fill="none"/></svg>
<div class="t num" style="left:453px;top:370px"><i class="c">0</i><i class="c">1</i><i class="c">0</i><i class="c">8</i><i class="c">0</i><i class="c">1</i><i class="c">0</i><i class="c">0</i><i class="c">3</i><i class="c">0</i><i class="c">0</i><i class="c">1</i></div>
<div class="t cj" style="left:574px;top:367px">项</div>
<div class="t cj" style="left:640px;top:367px">木质连窗门</div>
<div class="t num" style="left:1009px;top:370px"><i class="c m">m</i><i class="c">2</i></div>
<div class="t num" style="left:1069px;top:370px"><i class="c">4</i><i class="c">9</i><i class="c">0</i><i class="c">.</i><i class="c">5</i><i class="c">6</i></div>
<div class="t num" style="left:360px;top:390px"><i class="c">3</i><i class="c">2</i></div>
<div class="t cb" style="left:409px;top:388px"></div>
<svg class="t" style="left:410px;top:389px" width="11" height="11" viewBox="0 0 11 11"><path d="M1.6 5.5L3.9 8.1 8.3 3.4" stroke="#62667e" stroke-width="1.5" fill="none"/></svg>
<div class="t num" style="left:453px;top:390px"><i class="c">0</i><i class="c">1</i><i class="c">0</i><i class="c">8</i><i class="c">0</i><i class="c">2</i><i class="c">0</i><i class="c">0</i><i class="c">1</i><i class="c">0</i><i class="c">0</i><i class="c">1</i></div>
<div class="t cj" style="left:574px;top:388px">项</div>
<div class="t cj" style="left:640px;top:388px">金属<i class="p">(</i>塑钢<i class="p">)</i>门</div>
<div class="t num" style="left:1009px;top:390px"><i class="c m">m</i><i class="c">2</i></div>
<div class="t num" style="left:1069px;top:390px"><i class="c">1</i><i class="c">5</i><i class="c">.</i><i class="c">1</i><i class="c">2</i></div>
<div class="t num" style="left:360px;top:411px"><i class="c">3</i><i class="c">3</i></div>
<div class="t cb" style="left:409px;top:408px"></div>
<svg class="t" style="left:410px;top:409px" width="11" height="11" viewBox="0 0 11 11"><path d="M1.6 5.5L3.9 8.1 8.3 3.4" stroke="#62667e" stroke-width="1.5" fill="none"/></svg>
<div class="t num" style="left:453px;top:411px"><i class="c">0</i><i class="c">1</i><i class="c">0</i><i class="c">8</i><i class="c">0</i><i class="c">2</i><i class="c">0</i><i class="c">0</i><i class="c">1</i><i class="c">0</i><i class="c">0</i><i class="c">2</i></div>
<div class="t cj" style="left:574px;top:408px">项</div>
<div class="t cj" style="left:640px;top:408px">金属<i class="p">(</i>塑钢<i class="p">)</i>门</div>
<div class="t num" style="left:1009px;top:411px"><i class="c m">m</i><i class="c">2</i></div>
<div class="t num" style="left:1069px;top:411px"><i class="c">1</i><i class="c">7</i><i class="c">6</i><i class="c">.</i><i class="c">4</i></div>
<div class="t num" style="left:360px;top:431px"><i class="c">3</i><i class="c">4</i></div>
<div class="t cb" style="left:409px;top:429px"></div>
<svg class="t" style="left:410px;top:430px" width="11" height="11" viewBox="0 0 11 11"><path d="M1.6 5.5L3.9 8.1 8.3 3.4" stroke="#62667e" stroke-width="1.5" fill="none"/></svg>
<div class="t num" style="left:453px;top:431px"><i class="c">0</i><i class="c">1</i><i class="c">0</i><i class="c">8</i><i class="c">0</i><i class="c">2</i><i class="c">0</i><i class="c">0</i><i class="c">1</i><i class="c">0</i><i class="c">0</i><i class="c">3</i></div>
<div class="t cj" style="left:574px;top:429px">项</div>
<div class="t cj" style="left:640px;top:429px">金属<i class="p">(</i>塑钢<i class="p">)</i>门</div>
<div class="t num" style="left:1009px;top:431px"><i class="c m">m</i><i class="c">2</i></div>
<div class="t num" style="left:1069px;top:431px"><i class="c">2</i><i class="c">8</i><i class="c">0</i><i class="c">.</i><i class="c">5</i><i class="c">6</i></div>
<div class="t num" style="left:360px;top:452px"><i class="c">3</i><i class="c">5</i></div>
<div class="t cb" style="left:409px;top:449px"></div>
<svg class="t" style="left:410px;top:450px" width="11" height="11" viewBox="0 0 11 11"><path d="M1.6 5.5L3.9 8.1 8.3 3.4" stroke="#62667e" stroke-width="1.5" fill="none"/></svg>
<div class="t num" style="left:453px;top:452px"><i class="c">0</i><i class="c">1</i><i class="c">0</i><i class="c">8</i><i class="c">0</i><i class="c">2</i><i class="c">0</i><i class="c">0</i><i class="c">3</i><i class="c">0</i><i class="c">0</i><i class="c">1</i></div>
<div class="t cj" style="left:574px;top:449px">项</div>
<div class="t cj" style="left:640px;top:449px">钢质防火门</div>
<div class="t num" style="left:1009px;top:452px"><i class="c m">m</i><i class="c">2</i></div>
<div class="t num" style="left:1069px;top:452px"><i class="c">4</i><i class="c">1</i><i class="c">.</i><i class="c">4</i></div>
<div class="t num" style="left:360px;top:472px"><i class="c">3</i><i class="c">6</i></div>
<div class="t cb" style="left:409px;top:470px"></div>
<svg class="t" style="left:410px;top:471px" width="11" height="11" viewBox="0 0 11 11"><path d="M1.6 5.5L3.9 8.1 8.3 3.4" stroke="#62667e" stroke-width="1.5" fill="none"/></svg>
<div class="t num" style="left:453px;top:472px"><i class="c">0</i><i class="c">1</i><i class="c">0</i><i class="c">8</i><i class="c">0</i><i class="c">7</i><i class="c">0</i><i class="c">0</i><i class="c">1</i><i class="c">0</i><i class="c">0</i><i class="c">1</i></div>
<div class="t cj" style="left:574px;top:470px">项</div>
<div class="t cj" style="left:640px;top:470px">金属<i class="p">(</i>塑钢、断桥<i class="p">)</i>窗</div>
<div class="t num" style="left:1009px;top:472px"><i class="c m">m</i><i class="c">2</i></div>
<div class="t num" style="left:1069px;top:472px"><i class="c">4</i><i class="c">0</i><i class="c">.</i><i class="c">3</i><i class="c">2</i></div>
<div class="t num" style="left:360px;top:493px"><i class="c">3</i><i class="c">7</i></div>
<div class="t cb" style="left:409px;top:490px"></div>
<svg class="t" style="left:410px;top:491px" width="11" height="11" viewBox="0 0 11 11"><path d="M1.6 5.5L3.9 8.1 8.3 3.4" stroke="#62667e" stroke-width="1.5" fill="none"/></svg>
<div class="t num" style="left:453px;top:493px"><i class="c">0</i><i class="c">1</i><i class="c">0</i><i class="c">8</i><i class="c">0</i><i class="c">7</i><i class="c">0</i><i class="c">0</i><i class="c">1</i><i class="c">0</i><i class="c">0</i><i class="c">2</i></div>
<div class="t cj" style="left:574px;top:490px">项</div>
<div class="t cj" style="left:640px;top:490px">金属<i class="p">(</i>塑钢、断桥<i class="p">)</i>窗</div>
<div class="t num" style="left:1009px;top:493px"><i class="c m">m</i><i class="c">2</i></div>
<div class="t num" style="left:1069px;top:493px"><i class="c">1</i><i class="c">6</i><i class="c">5</i><i class="c">.</i><i class="c">8</i></div>
<div class="t num" style="left:360px;top:514px"><i class="c">3</i><i class="c">8</i></div>
<div class="t cb" style="left:409px;top:511px"></div>
<svg class="t" style="left:410px;top:512px" width="11" height="11" viewBox="0 0 11 11"><path d="M1.6 5.5L3.9 8.1 8.3 3.4" stroke="#62667e" stroke-width="1.5" fill="none"/></svg>
<div class="t num" style="left:453px;top:514px"><i class="c">0</i><i class="c">1</i><i class="c">0</i><i class="c">9</i><i class="c">0</i><i class="c">2</i><i class="c">0</i><i class="c">0</i><i class="c">1</i><i class="c">0</i><i class="c">0</i><i class="c">1</i></div>
<div class="t cj" style="left:574px;top:511px">项</div>
<div class="t cj" style="left:640px;top:511px">屋面卷材防水</div>
<div class="t num" style="left:1009px;top:514px"><i class="c m">m</i><i class="c">2</i></div>
<div class="t num" style="left:1069px;top:514px"><i class="c">1</i><i class="c">3</i><i class="c">4</i><i class="c">.</i><i class="c">9</i><i class="c">6</i><i class="c">0</i><i class="c">4</i></div>
<div class="t num" style="left:360px;top:534px"><i class="c">3</i><i class="c">9</i></div>
<div class="t cb" style="left:409px;top:531px"></div>
<svg class="t" style="left:410px;top:532px" width="11" height="11" viewBox="0 0 11 11"><path d="M1.6 5.5L3.9 8.1 8.3 3.4" stroke="#62667e" stroke-width="1.5" fill="none"/></svg>
<div class="t num" style="left:453px;top:534px"><i class="c">0</i><i class="c">1</i><i class="c">0</i><i class="c">9</i><i class="c">0</i><i class="c">2</i><i class="c">0</i><i class="c">0</i><i class="c">3</i><i class="c">0</i><i class="c">0</i><i class="c">1</i></div>
<div class="t cj" style="left:574px;top:531px">项</div>
<div class="t cj" style="left:640px;top:531px">屋面刚性层</div>
<div class="t num" style="left:1009px;top:534px"><i class="c m">m</i><i class="c">2</i></div>
<div class="t num" style="left:1069px;top:534px"><i class="c">8</i><i class="c">3</i><i class="c">.</i><i class="c">7</i><i class="c">9</i><i class="c">8</i></div>
<div class="t num" style="left:360px;top:555px"><i class="c">4</i><i class="c">0</i></div>
<div class="t cb" style="left:409px;top:552px"></div>
<svg class="t" style="left:410px;top:553px" width="11" height="11" viewBox="0 0 11 11"><path d="M1.6 5.5L3.9 8.1 8.3 3.4" stroke="#62667e" stroke-width="1.5" fill="none"/></svg>
<div class="t num" style="left:453px;top:555px"><i class="c">0</i><i class="c">1</i><i class="c">0</i><i class="c">9</i><i class="c">0</i><i class="c">3</i><i class="c">0</i><i class="c">0</i><i class="c">3</i><i class="c">0</i><i class="c">0</i><i class="c">1</i></div>
<div class="t cj" style="left:574px;top:552px">项</div>
<div class="t cj" style="left:640px;top:552px">墙面砂浆防水<i class="p">(</i>卫生间防潮<i class="p">)</i></div>
<div class="t num" style="left:1009px;top:555px"><i class="c m">m</i><i class="c">2</i></div>
<div class="t num" style="left:1069px;top:555px"><i class="c">2</i><i class="c">3</i><i class="c">3</i><i class="c">5</i><i class="c">.</i><i class="c">8</i><i class="c">7</i><i class="c">7</i></div>
<div class="t num" style="left:360px;top:575px"><i class="c">4</i><i class="c">1</i></div>
<div class="t cb" style="left:409px;top:572px"></div>
<svg class="t" style="left:410px;top:573px" width="11" height="11" viewBox="0 0 11 11"><path d="M1.6 5.5L3.9 8.1 8.3 3.4" stroke="#62667e" stroke-width="1.5" fill="none"/></svg>
<div class="t num" style="left:453px;top:575px"><i class="c">0</i><i class="c">1</i><i class="c">0</i><i class="c">9</i><i class="c">0</i><i class="c">4</i><i class="c">0</i><i class="c">0</i><i class="c">4</i><i class="c">0</i><i class="c">0</i><i class="c">1</i></div>
<div class="t cj" style="left:574px;top:572px">项</div>
<div class="t cj" style="left:640px;top:572px">楼<i class="p">(</i>地<i class="p">)</i>面变形缝</div>
<div class="t num" style="left:1009px;top:575px"><i class="c m">m</i></div>
<div class="t num" style="left:1069px;top:575px"><i class="c">1</i><i class="c">.</i><i class="c">8</i><i class="c">4</i><i class="c">3</i><i class="c">4</i></div>
<div class="t num" style="left:360px;top:596px"><i class="c">4</i><i class="c">2</i></div>
<div class="t cb" style="left:409px;top:593px"></div>
<svg class="t" style="left:410px;top:594px" width="11" height="11" viewBox="0 0 11 11"><path d="M1.6 5.5L3.9 8.1 8.3 3.4" stroke="#62667e" stroke-width="1.5" fill="none"/></svg>
<div class="t num" style="left:453px;top:596px"><i class="c">0</i><i class="c">1</i><i class="c">1</i><i class="c">0</i><i class="c">0</i><i class="c">1</i><i class="c">0</i><i class="c">0</i><i class="c">1</i><i class="c">0</i><i class="c">0</i><i class="c">1</i></div>
<div class="t cj" style="left:574px;top:593px">项</div>
<div class="t cj" style="left:640px;top:593px">保温隔热屋面</div>
<div class="t num" style="left:1009px;top:596px"><i class="c m">m</i><i class="c">2</i></div>
<div class="t num" style="left:1069px;top:596px"><i class="c">5</i><i class="c">7</i><i class="c">2</i><i class="c">.</i><i class="c">9</i><i class="c">1</i><i class="c">3</i><i class="c">2</i></div>
<div class="t num" style="left:360px;top:616px"><i class="c">4</i><i class="c">3</i></div>
<div class="t cb" style="left:409px;top:613px"></div>
<svg class="t" style="left:410px;top:614px" width="11" height="11" viewBox="0 0 11 11"><path d="M1.6 5.5L3.9 8.1 8.3 3.4" stroke="#62667e" stroke-width="1.5" fill="none"/></svg>
<div class="t num" style="left:453px;top:616px"><i class="c">0</i><i class="c">1</i><i class="c">1</i><i class="c">1</i><i class="c">0</i><i class="c">1</i><i class="c">0</i><i class="c">0</i><i class="c">1</i><i class="c">0</i><i class="c">0</i><i class="c">1</i></div>
<div class="t cj" style="left:574px;top:614px">项</div>
<div class="t cj" style="left:640px;top:614px">水泥砂浆楼地面（室内）</div>
<div class="t num" style="left:1009px;top:616px"><i class="c m">m</i><i class="c">2</i></div>
<div class="t num" style="left:1069px;top:616px"><i class="c">2</i><i class="c">4</i><i class="c">9</i><i class="c">5</i><i class="c">.</i><i class="c">9</i><i class="c">3</i><i class="c">2</i></div>
<div class="t num" style="left:360px;top:637px"><i class="c">4</i><i class="c">4</i></div>
<div class="t cb" style="left:409px;top:634px"></div>
<svg class="t" style="left:410px;top:635px" width="11" height="11" viewBox="0 0 11 11"><path d="M1.6 5.5L3.9 8.1 8.3 3.4" stroke="#62667e" stroke-width="1.5" fill="none"/></svg>
<div class="t num" style="left:453px;top:637px"><i class="c">0</i><i class="c">1</i><i class="c">1</i><i class="c">1</i><i class="c">0</i><i class="c">2</i><i class="c">0</i><i class="c">0</i><i class="c">3</i><i class="c">0</i><i class="c">0</i><i class="c">1</i></div>
<div class="t cj" style="left:574px;top:634px">项</div>
<div class="t cj" style="left:640px;top:634px">块料楼地面（走廊）</div>
<div class="t num" style="left:1009px;top:637px"><i class="c m">m</i><i class="c">2</i></div>
<div class="t num" style="left:1069px;top:637px"><i class="c">8</i><i class="c">0</i><i class="c">8</i><i class="c">.</i><i class="c">2</i><i class="c">3</i><i class="c">2</i><i class="c">3</i></div>
<div class="t num" style="left:360px;top:657px"><i class="c">4</i><i class="c">5</i></div>
<div class="t cb" style="left:409px;top:654px"></div>
<svg class="t" style="left:410px;top:655px" width="11" height="11" viewBox="0 0 11 11"><path d="M1.6 5.5L3.9 8.1 8.3 3.4" stroke="#62667e" stroke-width="1.5" fill="none"/></svg>
<div class="t num" style="left:453px;top:657px"><i class="c">0</i><i class="c">1</i><i class="c">1</i><i class="c">1</i><i class="c">0</i><i class="c">2</i><i class="c">0</i><i class="c">0</i><i class="c">3</i><i class="c">0</i><i class="c">0</i><i class="c">2</i></div>
<div class="t cj" style="left:574px;top:655px">项</div>
<div class="t cj" style="left:640px;top:655px">块料楼地面（卫生间）</div>
<div class="t num" style="left:1009px;top:657px"><i class="c m">m</i><i class="c">2</i></div>
<div class="t num" style="left:1069px;top:657px"><i class="c">3</i><i class="c">3</i><i class="c">6</i><i class="c">.</i><i class="c">9</i><i class="c">9</i><i class="c">7</i><i class="c">4</i></div>
<div class="t num" style="left:360px;top:678px"><i class="c">4</i><i class="c">6</i></div>
<div class="t cb" style="left:409px;top:675px"></div>
<svg class="t" style="left:410px;top:676px" width="11" height="11" viewBox="0 0 11 11"><path d="M1.6 5.5L3.9 8.1 8.3 3.4" stroke="#62667e" stroke-width="1.5" fill="none"/></svg>
<div class="t num" style="left:453px;top:678px"><i class="c">0</i><i class="c">1</i><i class="c">1</i><i class="c">1</i><i class="c">0</i><i class="c">5</i><i class="c">0</i><i class="c">0</i><i class="c">1</i><i class="c">0</i><i class="c">0</i><i class="c">1</i></div>
<div class="t cj" style="left:574px;top:675px">项</div>
<div class="t cj" style="left:640px;top:675px">水泥砂浆踢脚线</div>
<div class="t num" style="left:1009px;top:678px"><i class="c m">m</i><i class="c">2</i></div>
<div class="t num" style="left:1069px;top:678px"><i class="c">2</i><i class="c">4</i><i class="c">2</i><i class="c">.</i><i class="c">3</i><i class="c">1</i><i class="c">8</i><i class="c">4</i></div>
<div class="t num" style="left:360px;top:698px"><i class="c">4</i><i class="c">7</i></div>
<div class="t cb" style="left:409px;top:696px"></div>
<svg class="t" style="left:410px;top:697px" width="11" height="11" viewBox="0 0 11 11"><path d="M1.6 5.5L3.9 8.1 8.3 3.4" stroke="#62667e" stroke-width="1.5" fill="none"/></svg>
<div class="t num" style="left:453px;top:698px"><i class="c">0</i><i class="c">1</i><i class="c">1</i><i class="c">1</i><i class="c">0</i><i class="c">5</i><i class="c">0</i><i class="c">0</i><i class="c">3</i><i class="c">0</i><i class="c">0</i><i class="c">1</i></div>
<div class="t cj" style="left:574px;top:696px">项</div>
<div class="t cj" style="left:640px;top:696px">块料踢脚线</div>
<div class="t num" style="left:1009px;top:698px"><i class="c m">m</i><i class="c">2</i></div>
<div class="t num" style="left:1069px;top:698px"><i class="c">5</i><i class="c">8</i><i class="c">.</i><i class="c">3</i><i class="c">7</i><i class="c">4</i><i class="c">4</i></div>
<div class="t num" style="left:360px;top:719px"><i class="c">4</i><i class="c">8</i></div>
<div class="t cb" style="left:409px;top:716px"></div>
<svg class="t" style="left:410px;top:717px" width="11" height="11" viewBox="0 0 11 11"><path d="M1.6 5.5L3.9 8.1 8.3 3.4" stroke="#62667e" stroke-width="1.5" fill="none"/></svg>
<div class="t num" style="left:453px;top:719px"><i class="c">0</i><i class="c">1</i><i class="c">1</i><i class="c">1</i><i class="c">0</i><i class="c">5</i><i class="c">0</i><i class="c">0</i><i class="c">3</i><i class="c">0</i><i class="c">0</i><i class="c">2</i></div>
<div class="t cj" style="left:574px;top:716px">项</div>
<div class="t cj" style="left:640px;top:716px">块料踢脚线（楼梯）</div>
<div class="t num" style="left:1009px;top:719px"><i class="c m">m</i><i class="c">2</i></div>
<div class="t num" style="left:1069px;top:719px"><i class="c">2</i><i class="c">0</i><i class="c">.</i><i class="c">6</i><i class="c">9</i><i class="c">1</i><i class="c">2</i></div>
<div class="t num" style="left:360px;top:739px"><i class="c">4</i><i class="c">9</i></div>
<div class="t cb" style="left:409px;top:737px"></div>
<svg class="t" style="left:410px;top:738px" width="11" height="11" viewBox="0 0 11 11"><path d="M1.6 5.5L3.9 8.1 8.3 3.4" stroke="#62667e" stroke-width="1.5" fill="none"/></svg>
<div class="t num" style="left:453px;top:739px"><i class="c">0</i><i class="c">1</i><i class="c">1</i><i class="c">1</i><i class="c">0</i><i class="c">6</i><i class="c">0</i><i class="c">0</i><i class="c">2</i><i class="c">0</i><i class="c">0</i><i class="c">1</i></div>
<div class="t cj" style="left:574px;top:737px">项</div>
<div class="t cj" style="left:640px;top:737px">块料楼梯面层</div>
<div class="t num" style="left:1009px;top:739px"><i class="c m">m</i><i class="c">2</i></div>
<div class="t num" style="left:1069px;top:739px"><i class="c">9</i><i class="c">4</i><i class="c">.</i><i class="c">5</i><i class="c">5</i><i class="c">0</i><i class="c">4</i></div>
<div class="t num" style="left:360px;top:760px"><i class="c">5</i><i class="c">0</i></div>
<div class="t cb" style="left:409px;top:757px"></div>
<svg class="t" style="left:410px;top:758px" width="11" height="11" viewBox="0 0 11 11"><path d="M1.6 5.5L3.9 8.1 8.3 3.4" stroke="#62667e" stroke-width="1.5" fill="none"/></svg>
<div class="t num" style="left:453px;top:760px"><i class="c">0</i><i class="c">1</i><i class="c">1</i><i class="c">1</i><i class="c">0</i><i class="c">8</i><i class="c">0</i><i class="c">0</i><i class="c">4</i><i class="c">0</i><i class="c">0</i><i class="c">1</i></div>
<div class="t cj" style="left:574px;top:757px">项</div>
<div class="t cj" style="left:640px;top:757px">水泥砂浆零星项目</div>
<div class="t num" style="left:1009px;top:760px"><i class="c m">m</i><i class="c">2</i></div>
<div class="t num" style="left:1069px;top:760px"><i class="c">1</i><i class="c">8</i><i class="c">.</i><i class="c">2</i><i class="c">9</i><i class="c">5</i></div>
<div style="left:1280px;top:172px;width:19px;height:603px;background:#e1e1e1"></div>
<div style="left:1280px;top:173px;width:15px;height:14px;background:#fff;border:1px solid #e6e6e6;box-sizing:border-box"></div>
<div class="tri" style="left:1283px;top:177px;border-width:0 4.5px 4px 4.5px;border-color:transparent transparent #5f5f6a transparent"></div>
<div style="left:1280px;top:399px;width:15px;height:276px;background:#cacaca;border-radius:2px"></div>
<div style="left:1280px;top:761px;width:15px;height:15px;background:#fff;border:1px solid #e6e6e6;box-sizing:border-box"></div>
<div class="tri" style="left:1283px;top:767px;border-width:4px 4.5px 0 4.5px;border-color:#5f5f6a transparent transparent transparent"></div>
<div style="left:1023px;top:794px;width:13px;height:13px;background:#fff;border:1px solid #b0b0b0;box-sizing:border-box"></div>
<div class="t" style="left:1042px;top:792px;font-size:13px;line-height:17px;color:#222">清空导入</div>
<div style="left:1107px;top:787px;width:93px;height:28px;background:#00a6ed"></div>
<div class="t" style="left:1140px;top:792px;font-size:13px;line-height:17px;color:#fff">导入</div>
<div style="left:1207px;top:786px;width:94px;height:29px;background:#f0f0f0;border:1px solid #c0c0c0;box-sizing:border-box"></div>
<div class="t" style="left:1240px;top:792px;font-size:13px;line-height:17px;color:#222">关闭</div>
</body></html>
